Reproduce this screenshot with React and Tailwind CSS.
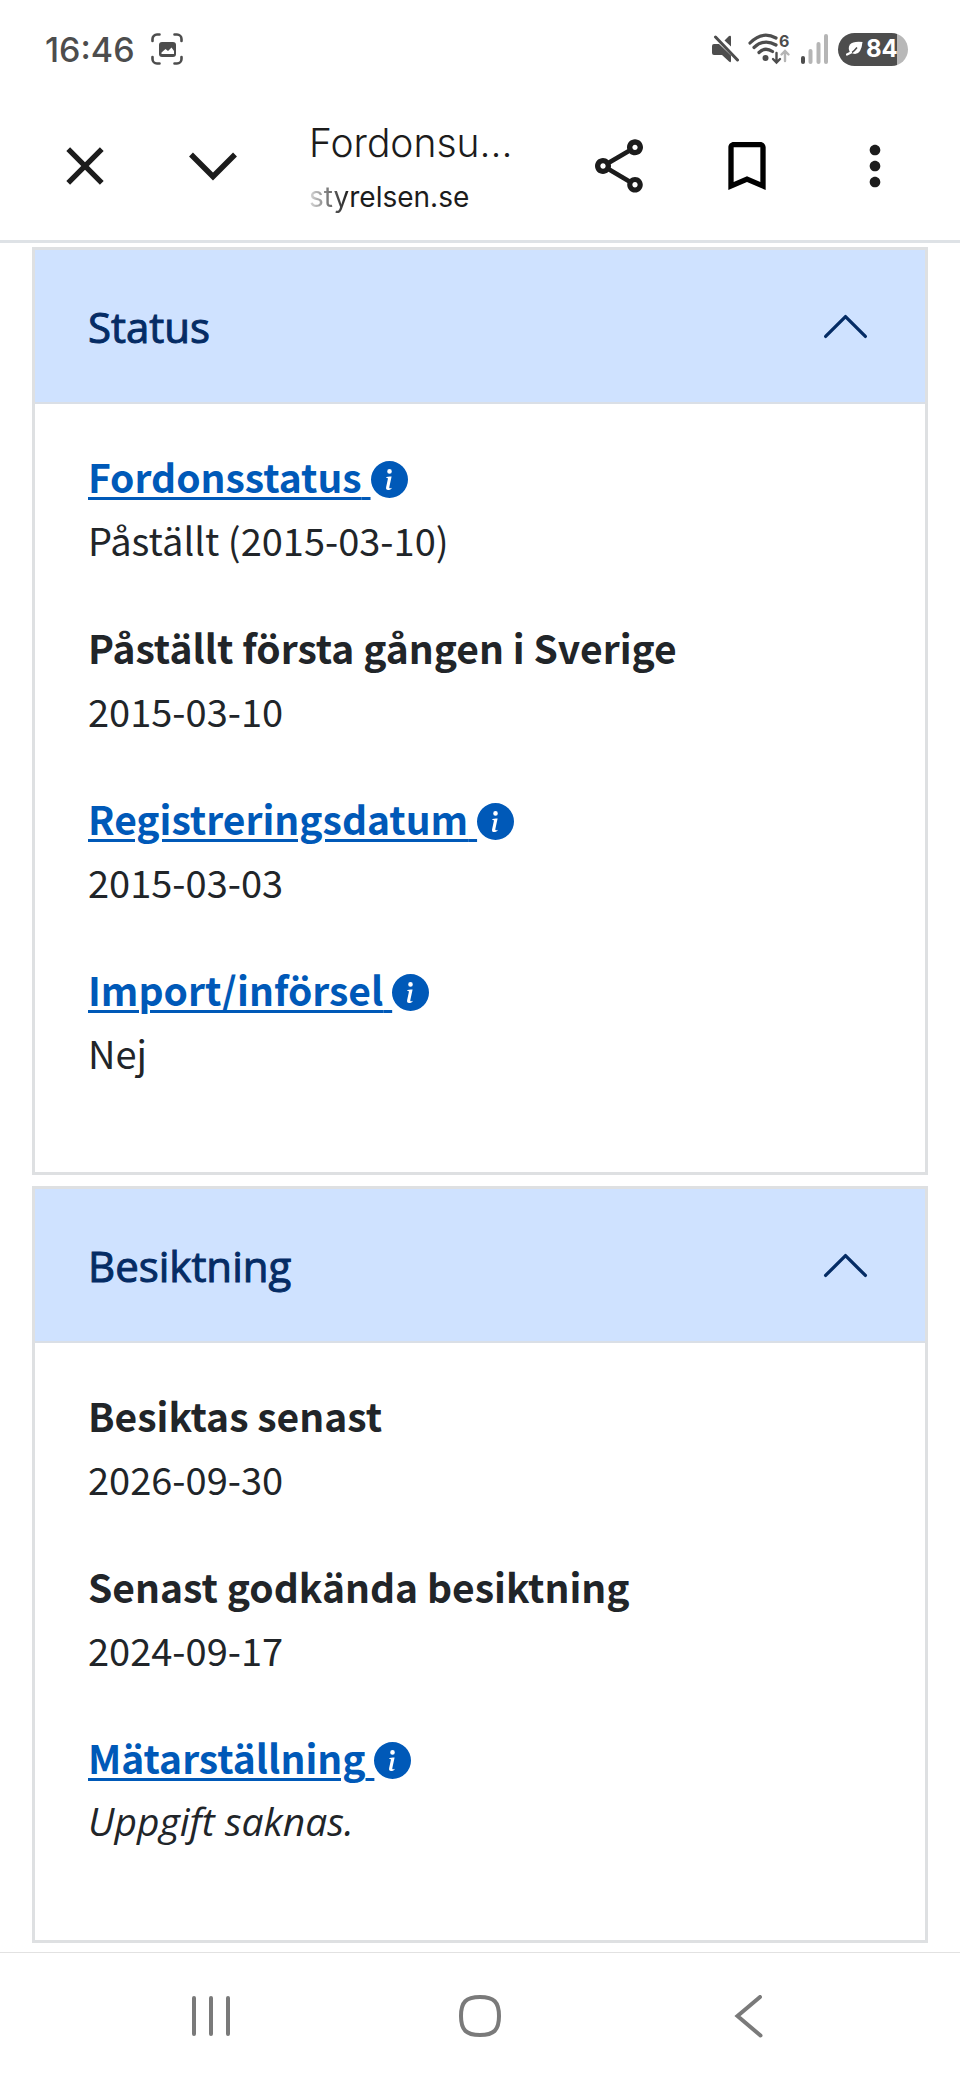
import React, { useState } from "react";
import {
  MdBookmarkBorder,
  MdClose,
  MdMoreVert,
  MdOutlineShare,
} from "react-icons/md";
import { BsInfoCircleFill } from "react-icons/bs";

const sections = [
  {
    id: "status",
    title: "Status",
    rows: [
      { label: "Fordonsstatus", value: "Påställt (2015-03-10)", info: true },
      { label: "Påställt första gången i Sverige", value: "2015-03-10" },
      { label: "Registreringsdatum", value: "2015-03-03", info: true },
      { label: "Import/införsel", value: "Nej", info: true },
    ],
  },
  {
    id: "besiktning",
    title: "Besiktning",
    rows: [
      { label: "Besiktas senast", value: "2026-09-30" },
      { label: "Senast godkända besiktning", value: "2024-09-17" },
      { label: "Mätarställning", value: "Uppgift saknas.", info: true, missing: true },
    ],
  },
];

const CaptureIcon = () => (
  <svg width="32" height="32" viewBox="0 0 32 32" fill="none" aria-hidden="true">
    <path
      d="M1.5 8V6A4.5 4.5 0 0 1 6 1.500H8.500M23.500 1.500H26A4.500 4.500 0 0 1 30.500 6V8M30.500 24V26A4.500 4.500 0 0 1 26 30.500H23.500M8.500 30.500H6A4.500 4.500 0 0 1 1.500 26V24"
      stroke="#4d4d4d"
      strokeWidth="2.6"
      strokeLinecap="round"
    />
    <rect x="8" y="9" width="17" height="15" rx="3" fill="#4d4d4d" />
    <path d="M10.500 21V19.500L14.500 16L17 18L20.500 14.500L23 18V21Z" fill="#fff" />
  </svg>
);

const MuteIcon = () => (
  <svg width="28" height="28" viewBox="0 0 28 28" fill="#4d4d4d" aria-hidden="true">
    <path d="M1 11Q1 9 3 9H8L20 20.500V26Q20 28 18 26.500L11 20H3Q1 20 1 18Z" />
    <path d="M13.500 5.500L18 1Q20 0 20 2V11.500Z" />
    <path d="M4.500 2L26.500 25" stroke="#4d4d4d" strokeWidth="3" strokeLinecap="round" />
  </svg>
);

const WifiIcon = () => (
  <svg width="44" height="40" viewBox="0 -4 44 40" fill="none" aria-hidden="true">
    <g stroke="#4d4d4d" strokeWidth="3.2" strokeLinecap="round">
      <path d="M2 10Q14 -2.500 28 5" />
      <path d="M6 14.500Q16 5 28 12" />
      <path d="M11 19.500Q17 13.500 24.500 18.500" />
    </g>
    <circle cx="17.500" cy="25" r="3" fill="#4d4d4d" />
    <path d="M28.500 20V29M25 26L28.500 29.500L32 26" stroke="#4d4d4d" strokeWidth="2.4" strokeLinecap="round" />
    <path d="M37 28V18.500M33.500 21.500L37 18L40.500 21.500" stroke="#b5b5b5" strokeWidth="2.4" strokeLinecap="round" />
    <text x="31" y="14" fontFamily="Inter, sans-serif" fontSize="16" fontWeight="700" fill="#4d4d4d">
      6
    </text>
  </svg>
);

const SignalIcon = () => (
  <svg width="28" height="32" viewBox="0 0 28 32" aria-hidden="true">
    <rect x="0" y="23" width="4" height="8" rx="2" fill="#4d4d4d" />
    <rect x="7.500" y="16" width="4" height="15" rx="2" fill="#b5b5b5" />
    <rect x="15.500" y="9" width="4" height="22" rx="2" fill="#b5b5b5" />
    <rect x="23" y="1" width="4" height="30" rx="2" fill="#b5b5b5" />
  </svg>
);

const LeafIcon = () => (
  <svg width="18" height="16" viewBox="0 0 18 16" fill="none" aria-hidden="true">
    <path d="M16.500 1Q7 0 4 3.500Q1.500 7 4 11.500Q11 15 14 10Q16 6.500 16.500 1Z" fill="#fff" />
    <path d="M1 13.500Q6 13 11 6.500" stroke="#4d4d4d" strokeWidth="1.500" />
    <path d="M1 13.500L5 11.500" stroke="#fff" strokeWidth="2.2" strokeLinecap="round" />
  </svg>
);

const StatusBar = () => (
  <div className="flex h-24 items-center pt-0.5 pr-[52px] pl-[45px] text-[#4d4d4d]">
    <span className="text-[34px] font-medium">16:46</span>
    <span className="ml-4">
      <CaptureIcon />
    </span>
    <div className="ml-auto flex items-center gap-[9px]">
      <MuteIcon />
      <WifiIcon />
      <SignalIcon />
      <div className="flex h-[33px] w-[70px] items-center gap-0.5 rounded-full bg-linear-to-r from-[#4d4d4d] from-84% to-[#b8b8b8] to-84% pl-2 text-white">
        <LeafIcon />
        <span className="text-2xl font-bold">84</span>
      </div>
    </div>
  </div>
);

const Toolbar = () => (
  <header className="flex h-36 items-center px-[21px] text-[#1c1c1c]">
    <button type="button" aria-label="Stäng" className="flex w-32 justify-center pb-1">
      <MdClose size={64} />
    </button>
    <button type="button" aria-label="Minimera" className="flex w-32 justify-center pb-1">
      <svg width="64" height="64" viewBox="0 0 64 64" fill="none">
        <path d="M10 20.500L32 42.500L54 20.500" stroke="currentColor" strokeWidth="5.5" />
      </svg>
    </button>

    <div className="min-w-0 flex-1 pt-1 pl-8">
      <p className="text-[39px] leading-[54px] font-light whitespace-nowrap">Fordonsu...</p>
      <p className="text-[28px] leading-[54px] whitespace-nowrap">
        <span className="bg-linear-to-r from-[#dddddd] to-[#1c1c1c] bg-clip-text text-transparent">sty</span>relsen.se
      </p>
    </div>

    <button type="button" aria-label="Dela" className="flex w-32 justify-center pb-1">
      <MdOutlineShare size={64} />
    </button>
    <button type="button" aria-label="Bokmärke" className="flex w-32 justify-center pb-1 text-black">
      <MdBookmarkBorder size={64} />
    </button>
    <button type="button" aria-label="Fler alternativ" className="flex w-32 justify-center pb-1">
      <MdMoreVert size={64} />
    </button>
  </header>
);

const Row = ({ row }) => (
  <div>
    <dt className="text-[39px] leading-[64px] font-bold">
      {row.info ? (
        <a
          href="#info"
          className="text-[#0059b8] underline decoration-[3px] underline-offset-4"
        >
          {row.label}{" "}
          <BsInfoCircleFill size={37} className="inline-block align-[-5px]" />
        </a>
      ) : (
        row.label
      )}
    </dt>
    <dd
      className={
        row.missing
          ? "font-['Open_Sans',sans-serif] text-[39px] leading-[64px] italic"
          : "text-[38px] leading-[64px]"
      }
    >
      {row.value}
    </dd>
  </div>
);

const Section = ({ section }) => {
  const [open, setOpen] = useState(true);

  return (
    <section className="border-[3px] border-[#dee0e2]">
      <h2>
        <button
          type="button"
          aria-expanded={open}
          aria-controls={section.id}
          onClick={() => setOpen(!open)}
          className="flex h-[154px] w-full items-center justify-between border-b-2 border-[#dadfe6] bg-[#cfe2ff] px-[53px] font-['Open_Sans',sans-serif] text-[42px] font-medium text-[#052c65] [-webkit-text-stroke:1px_#052c65]"
        >
          {section.title}
          <svg
            width="53"
            height="53"
            viewBox="0 0 16 16"
            fill="none"
            className={open ? "" : "rotate-180"}
          >
            <path
              d="M2 11L8 5L14 11"
              stroke="currentColor"
              strokeLinecap="round"
              strokeLinejoin="round"
            />
          </svg>
        </button>
      </h2>
      {open && (
        <dl
          id={section.id}
          className="flex flex-col gap-[43px] px-[53px] pt-10 pb-[87px] font-['Noto_Sans_CJK_SC',sans-serif] text-[#212529]"
        >
          {section.rows.map((row) => (
            <Row key={row.label} row={row} />
          ))}
        </dl>
      )}
    </section>
  );
};

const NavBar = () => (
  <nav className="flex h-32 items-center border-t border-[#e2e2e2] px-[76px] text-[#7a7a7a]">
    <button type="button" aria-label="Senaste appar" className="flex flex-1 justify-center">
      <svg width="44" height="44" viewBox="0 0 44 44" stroke="currentColor" strokeWidth="4" strokeLinecap="round">
        <path d="M5 3V39M22 3V39M39 3V39" />
      </svg>
    </button>
    <button type="button" aria-label="Hem" className="flex flex-1 justify-center">
      <svg width="44" height="44" viewBox="0 0 44 44" fill="none" stroke="currentColor" strokeWidth="4">
        <path d="M22 2C36 2 41 7 41 21C41 35 36 40 22 40C8 40 3 35 3 21C3 7 8 2 22 2Z" />
      </svg>
    </button>
    <button type="button" aria-label="Tillbaka" className="flex flex-1 justify-center">
      <svg width="44" height="44" viewBox="0 0 44 44" fill="none" stroke="currentColor" strokeWidth="4" strokeLinecap="round">
        <path d="M33 2L10.500 21L33.500 40.500" />
      </svg>
    </button>
  </nav>
);

const App = () => {
  return (
    <div className="bg-white font-['Inter',sans-serif]">
      <StatusBar />
      <Toolbar />
      <main className="flex flex-col gap-[11px] border-t-[3px] border-[#dee2e6] px-8 pt-1 pb-[9px]">
        {sections.map((section) => (
          <Section key={section.id} section={section} />
        ))}
      </main>
      <NavBar />
    </div>
  );
};

export default App;
